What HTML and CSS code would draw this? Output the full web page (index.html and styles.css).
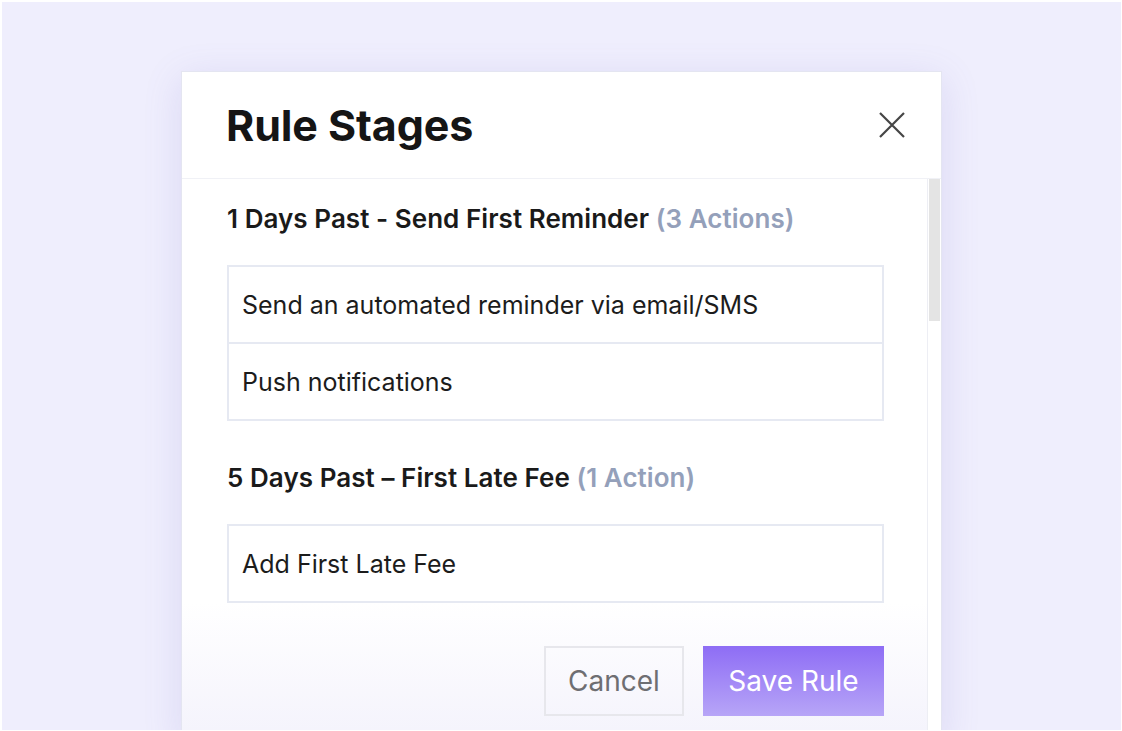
FILE: index.html
```html
<!DOCTYPE html>
<html>
<head>
<meta charset="utf-8">
<link rel="stylesheet" href="styles.css">
</head>
<body>
<div class="frame">
  <div class="modal">
    <div class="modal-header">
      <h1 class="title">Rule Stages</h1>
      <button class="close" aria-label="Close">
        <svg width="26" height="26" viewBox="0 0 26 26"><path d="M1 1 L25 25 M25 1 L1 25" stroke="#454545" stroke-width="2.2" fill="none"/></svg>
      </button>
    </div>
    <div class="modal-body">
      <div class="content">
        <section class="stage">
          <h2 class="stage-title">1 Days Past - Send First Reminder <span class="count">(3 Actions)</span></h2>
          <ul class="actions">
            <li class="action">Send an automated reminder via email/SMS</li>
            <li class="action">Push notifications</li>
          </ul>
        </section>
        <section class="stage stage-second">
          <h2 class="stage-title">5 Days Past – First Late Fee <span class="count">(1 Action)</span></h2>
          <ul class="actions">
            <li class="action">Add First Late Fee</li>
          </ul>
        </section>
        <div class="footer">
          <button class="btn btn-cancel">Cancel</button>
          <button class="btn btn-save">Save Rule</button>
        </div>
      </div>
      <div class="scrollbar"><div class="thumb"></div></div>
    </div>
  </div>
</div>
</body>
</html>
```

FILE: styles.css
```css
* { box-sizing: border-box; }
html, body { margin: 0; padding: 0; background: #ffffff; }
body { font-family: Inter, "Noto Sans", sans-serif; color: #1a1a1a; overflow: hidden; }

.frame {
  margin: 2px 1px 1px 2px;
  height: 728px;
  background: #EFEEFD;
  overflow: hidden;
  padding: 69px 0 0 179px;
}

.modal {
  width: 761px;
  background: #ffffff;
  border: 1px solid #E4E5F1;
  box-shadow: 0 8px 36px rgba(110, 100, 190, 0.16);
}

.modal-header {
  height: 107px;
  border-bottom: 1px solid #F0F1F6;
  display: flex;
  align-items: center;
  justify-content: space-between;
  padding: 0 36px 0 44px;
}

.title {
  margin: 0;
  font-size: 43px;
  font-weight: 700;
  letter-spacing: -0.1px;
  color: #151515;
}

.close {
  border: 0;
  background: none;
  padding: 0;
  width: 26px;
  height: 26px;
  display: flex;
}

.modal-body {
  display: flex;
}

.content {
  flex: 1;
  padding: 25px 43px 0 45px;
}

.stage-title {
  margin: 0;
  font-size: 26px;
  font-weight: 600;
  line-height: 30px;
  letter-spacing: 0.05px;
  color: #1a1a1a;
}

.count { color: #94A0BA; }

.actions {
  list-style: none;
  margin: 31px 0 0;
  padding: 0;
  border: 2px solid #E6E9F2;
}

.action {
  height: 75px;
  display: flex;
  align-items: center;
  padding: 0 13px;
  font-size: 25px;
  color: #1c1c1c;
}

.action + .action { border-top: 2px solid #E6E9F2; height: 77px; }

.stage-second { margin-top: 42px; }

.footer {
  margin: 0 -43px 0 -45px;
  padding: 43px 43px 24px 0;
  display: flex;
  justify-content: flex-end;
  gap: 19px;
  background: linear-gradient(#ffffff 0%, #F4F3FC 100%);
}

.btn {
  height: 70px;
  font-family: Inter, "Noto Sans", sans-serif;
  font-size: 28px;
  padding: 0;
}

.btn-cancel {
  width: 140px;
  border: 2px solid #E7E7EC;
  background: transparent;
  color: #6E6E72;
}

.btn-save {
  width: 181px;
  border: 0;
  color: #ffffff;
  background: linear-gradient(#8E6DF5 0%, #B7A5F7 100%);
}

.scrollbar {
  width: 14px;
  border-left: 1px solid #EDEEF4;
  padding: 0 1px;
  background: #ffffff;
}

.thumb {
  height: 142px;
  background: #E4E4E4;
}
```
